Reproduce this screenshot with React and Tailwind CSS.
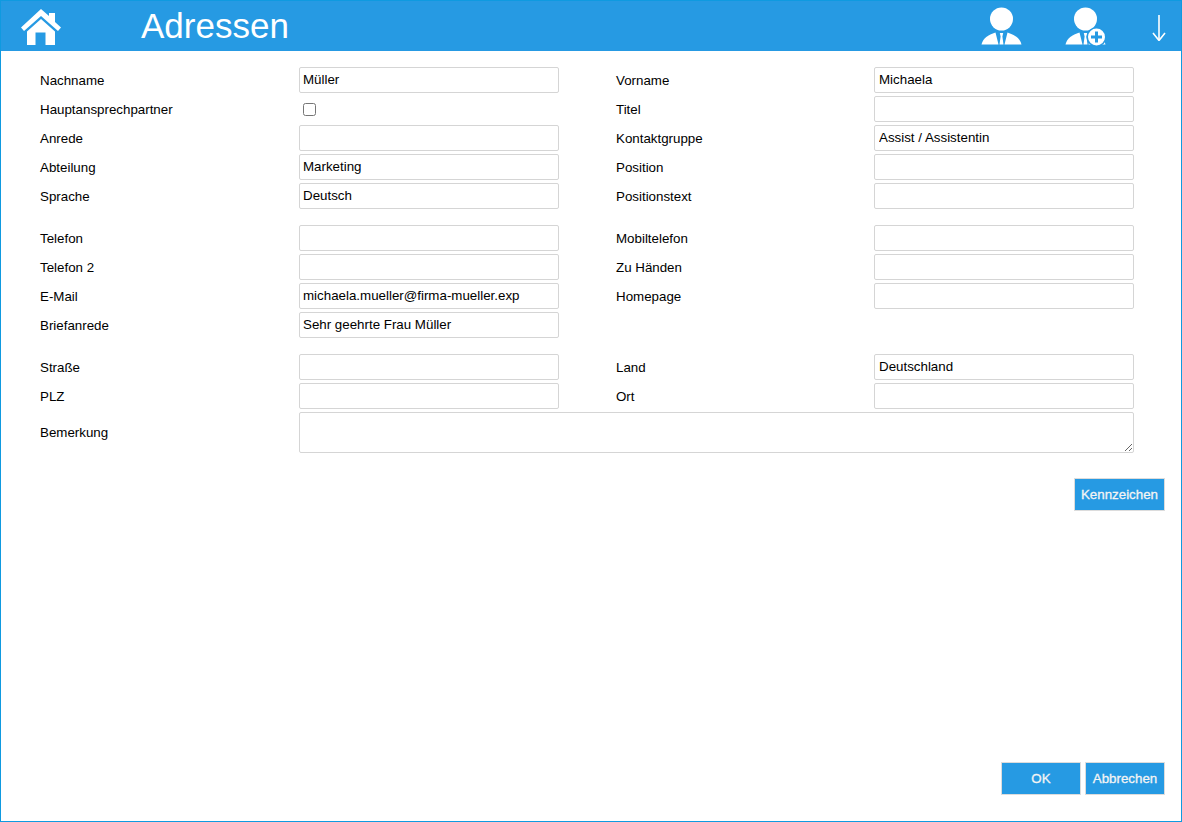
import React from "react";

const labelClass = "text-[13.33px] text-black h-[26px] leading-[28px]";
const inputClass =
  "h-[26px] w-[260px] border border-[#d5d5d5] rounded-[2px] pl-[3px] pr-[2px] pb-[2px] text-[13.33px] text-black bg-white outline-none font-['Liberation_Sans',sans-serif]";
const btnClass =
  "h-[33px] bg-[#269ae3] border border-[#dcdcdc] text-[13.33px] text-[#f4f4f4] [-webkit-text-stroke:0.3px_#f4f4f4] font-['Liberation_Sans',sans-serif]";

function HomeIcon() {
  return (
    <svg width="42" height="38" viewBox="0 0 42 38" fill="white">
      <path d="M21 1 L29 8 V5 H35 V14 L41 19.5 L38 23 L21 8 L4 23 L1 19.5 Z" />
      <path d="M21 11 L35 23.5 V37 H25.5 V24.5 H15.5 V37 H7 V23.5 Z" />
    </svg>
  );
}

function PersonIcon({ plus }) {
  return (
    <svg width="42" height="40" viewBox="0 0 42 40">
      <circle cx="20.5" cy="12" r="11.5" fill="white" />
      <path d="M0.5 37.5 C2 31 7 28 14.5 25.5 L17.5 37.5 Z" fill="white" />
      <path d="M40.5 37.5 C39 31 34 28 26.5 25.5 L23.5 37.5 Z" fill="white" />
      <path d="M18.8 26 H22.2 L21.4 29.5 L22.5 37.5 H18.5 L19.6 29.5 Z" fill="white" />
      {plus && (
        <g>
          <circle cx="31.5" cy="30" r="10" fill="#269ae3" />
          <circle cx="31.5" cy="30" r="8.5" fill="white" />
          <path d="M31.5 24.5 V35.5 M26 30 H37" stroke="#269ae3" strokeWidth="3" />
        </g>
      )}
    </svg>
  );
}

function ArrowIcon() {
  return (
    <svg width="14" height="28" viewBox="0 0 14 28" fill="none" stroke="white" strokeWidth="1.6">
      <path d="M7 2 V27" />
      <path d="M1 20 L7 27.5 L13 20" />
    </svg>
  );
}

function Row({ l1, v1, l2, v2, check, className = "" }) {
  return (
    <div className={`flex items-start ${className}`}>
      <div className={`w-[259px] ${labelClass}`}>{l1}</div>
      {check ? (
        <div className="w-[260px] h-[26px] flex items-center pl-1">
          <input type="checkbox" className="w-[13px] h-[13px] m-0" />
        </div>
      ) : (
        <input readOnly value={v1 || ""} className={inputClass} />
      )}
      <div className={`w-[315px] pl-[57px] ${labelClass}`}>{l2}</div>
      {l2 && <input readOnly value={v2 || ""} className={`${inputClass} pl-[4px]`} />}
    </div>
  );
}

export default function App() {
  return (
    <div className="w-[1182px] h-[822px] flex flex-col border border-[#0f9ae0] bg-white font-['Liberation_Sans',sans-serif]">
      <header className="h-[50px] shrink-0 bg-[#269ae3] flex items-center relative">
        <div className="ml-[19px] w-[121px] mt-px"><HomeIcon /></div>
        <h1 className="text-[35px] text-white leading-none -mt-[2px]">Adressen</h1>
        <div className="ml-auto flex items-center mt-[2px]">
          <PersonIcon />
          <div className="ml-[42px]"><PersonIcon plus /></div>
          <div className="ml-[45px] mr-[15px]"><ArrowIcon /></div>
        </div>
      </header>

      <main className="flex-1 flex flex-col pl-[39px] pr-[16px] pt-[16px] pb-[26px]">
        <div className="flex flex-col gap-[3px]">
          <Row l1="Nachname" v1="Müller" l2="Vorname" v2="Michaela" />
          <Row l1="Hauptansprechpartner" check l2="Titel" />
          <Row l1="Anrede" l2="Kontaktgruppe" v2="Assist / Assistentin" />
          <Row l1="Abteilung" v1="Marketing" l2="Position" />
          <Row l1="Sprache" v1="Deutsch" l2="Positionstext" />
          <Row l1="Telefon" l2="Mobiltelefon" className="mt-[13px]" />
          <Row l1="Telefon 2" l2="Zu Händen" />
          <Row l1="E-Mail" v1="michaela.mueller@firma-mueller.exp" l2="Homepage" />
          <Row l1="Briefanrede" v1="Sehr geehrte Frau Müller" />
          <Row l1="Straße" l2="Land" v2="Deutschland" className="mt-[13px]" />
          <Row l1="PLZ" l2="Ort" />
          <div className="flex items-start">
            <div className={`w-[259px] ${labelClass} mt-[7px]`}>Bemerkung</div>
            <textarea
              readOnly
              className="h-[41px] w-[835px] border border-[#d5d5d5] rounded-[2px] outline-none bg-white resize-y"
            />
          </div>
        </div>

        <div className="flex justify-end mt-[25px]">
          <button className={`${btnClass} w-[91px]`}>Kennzeichen</button>
        </div>

        <div className="flex justify-end gap-[4px] mt-auto">
          <button className={`${btnClass} w-[80px]`}>OK</button>
          <button className={`${btnClass} w-[80px]`}>Abbrechen</button>
        </div>
      </main>
    </div>
  );
}
